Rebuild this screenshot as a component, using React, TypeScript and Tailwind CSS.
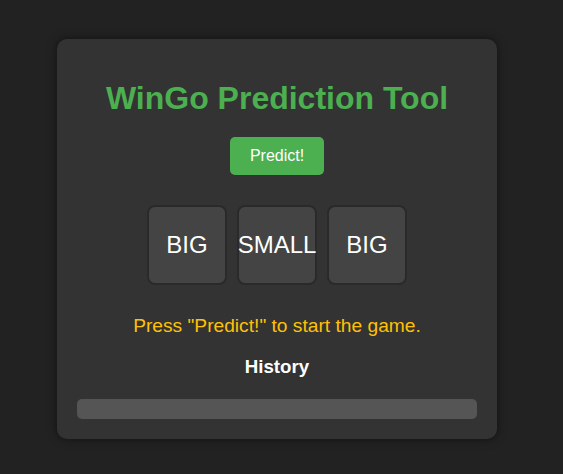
export default function App() {
  const boxes = ["BIG", "SMALL", "BIG"];

  return (
    <div className="min-h-screen bg-[#222222] pl-[57px] pt-[39px] font-['Liberation_Sans',Arial,sans-serif]">
      <div className="flex w-[440px] flex-col items-center rounded-[10px] bg-[#333333] px-5 pt-5 pb-5 shadow-[0_0_10px_rgba(0,0,0,0.5)]">
        <h1 className="mt-[21px] text-[32px] leading-[37px] font-bold text-[#4caf50]">WinGo Prediction Tool</h1>

        <button className="mt-5 h-[38px] rounded-[5px] bg-[#4caf50] px-5 text-base text-white">Predict!</button>

        <div className="mt-[30px] flex gap-[10px]">
          {boxes.map((b, i) => (
            <div
              key={i}
              className="flex h-[80px] w-[80px] items-center justify-center rounded-lg border-2 border-[#2a2a2a] bg-[#444444] text-2xl text-white"
            >
              {b}
            </div>
          ))}
        </div>

        <p className="mt-[30px] text-[19.2px] leading-[22px] text-[#ffc107]">Press "Predict!" to start the game.</p>

        <h3 className="mt-[19px] text-[18.72px] leading-[21.5px] font-bold text-white">History</h3>

        <div className="mt-[21px] h-5 w-full rounded-[5px] bg-[#555555]"></div>
      </div>
    </div>
  );
}
